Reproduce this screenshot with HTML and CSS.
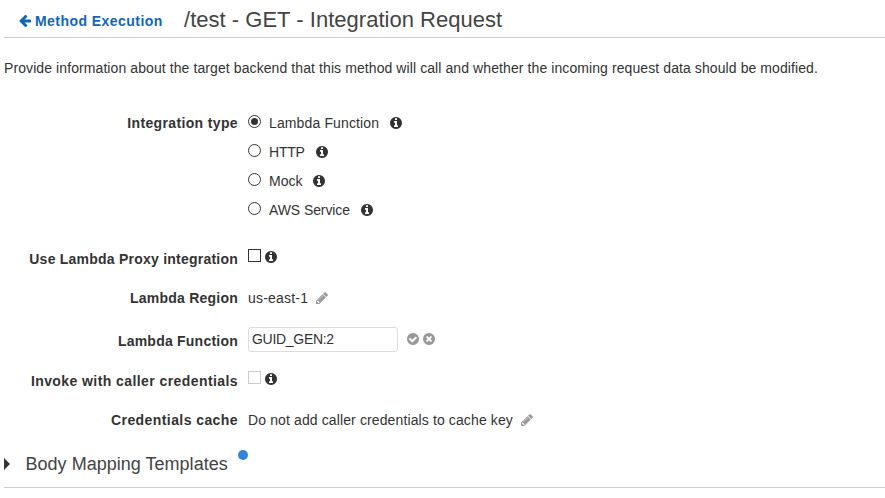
FILE: index.html
```html
<!DOCTYPE html>
<html lang="en">
<head>
<meta charset="utf-8">
<title>Integration Request</title>
<link rel="stylesheet" href="styles.css">
</head>
<body>
<svg class="sprite" aria-hidden="true">
  <defs>
    <symbol id="info" viewBox="0 128 1536 1536"><path d="M1024 1376v-160q0-14-9-23t-23-9h-96v-512q0-14-9-23t-23-9h-320q-14 0-23 9t-9 23v160q0 14 9 23t23 9h96v320h-96q-14 0-23 9t-9 23v160q0 14 9 23t23 9h448q14 0 23-9t9-23zm-128-896v-160q0-14-9-23t-23-9h-192q-14 0-23 9t-9 23v160q0 14 9 23t23 9h192q14 0 23-9t9-23zm640 416q0 209-103 385.5t-279.5 279.5-385.5 103-385.5-103-279.5-279.5-103-385.5 103-385.5 279.5-279.5 385.5-103 385.5 103 279.5 279.5 103 385.5z"/></symbol>
    <symbol id="check" viewBox="0 128 1536 1536"><path d="M1284 734q0-28-18-46l-91-90q-19-19-45-19t-45 19l-408 407-226-226q-19-19-45-19t-45 19l-91 90q-18 18-18 46 0 27 18 45l362 362q19 19 45 19 27 0 46-19l543-543q18-18 18-45zm252 162q0 209-103 385.5t-279.5 279.5-385.5 103-385.5-103-279.5-279.5-103-385.5 103-385.5 279.5-279.5 385.5-103 385.5 103 279.5 279.5 103 385.5z"/></symbol>
    <symbol id="times" viewBox="0 128 1536 1536"><path d="M1149 1122q0-26-19-45l-181-181 181-181q19-19 19-45 0-27-19-46l-90-90q-19-19-46-19-26 0-45 19l-181 181-181-181q-19-19-45-19-27 0-46 19l-90 90q-19 19-19 46 0 26 19 45l181 181-181 181q-19 19-19 45 0 27 19 46l90 90q19 19 46 19 26 0 45-19l181-181 181 181q19 19 45 19 27 0 46-19l90-90q19-19 19-46zm387-226q0 209-103 385.5t-279.5 279.5-385.5 103-385.5-103-279.5-279.5-103-385.5 103-385.5 279.5-279.5 385.5-103 385.5 103 279.5 279.5 103 385.5z"/></symbol>
    <symbol id="pencil" viewBox="0 128 1536 1536"><path d="M363 1536l91-91-235-235-91 91v107h128v128h107zm523-928q0-22-22-22-10 0-17 7l-542 542q-7 7-7 17 0 22 22 22 10 0 17-7l542-542q7-7 7-17zm-54-192l416 416-832 832h-416v-416zm683 96q0 53-37 90l-166 166-416-416 166-165q36-38 90-38 53 0 91 38l235 234q37 39 37 91z"/></symbol>
    <symbol id="arrow" viewBox="0 192 1536 1536"><path d="M1536 896v128q0 53-32.5 90.5t-84.5 37.5h-704l293 294q38 36 38 90t-38 90l-75 76q-37 37-90 37-52 0-91-37l-651-652q-37-37-37-90 0-52 37-91l651-650q38-38 91-38 52 0 90 38l75 74q38 38 38 91t-38 91l-293 293h704q52 0 84.5 37.5t32.5 90.5z"/></symbol>
  </defs>
</svg>
<main class="page">
  <header class="header">
    <a class="back"><svg class="icon"><use href="#arrow"/></svg><span class="back-text">Method Execution</span></a>
    <h1 class="title">/test - GET - Integration Request</h1>
  </header>
  <p class="intro">Provide information about the target backend that this method will call and whether the incoming request data should be modified.</p>
  <form class="form">
    <div class="row row-type">
      <span class="label">Integration type</span>
      <div class="options">
        <label class="option"><span class="radio checked"></span><span class="t-lambda">Lambda Function</span><svg class="icon"><use href="#info"/></svg></label>
        <label class="option"><span class="radio"></span><span class="t-http">HTTP</span><svg class="icon"><use href="#info"/></svg></label>
        <label class="option"><span class="radio"></span><span class="t-mock">Mock</span><svg class="icon"><use href="#info"/></svg></label>
        <label class="option"><span class="radio"></span><span class="t-aws">AWS Service</span><svg class="icon"><use href="#info"/></svg></label>
      </div>
    </div>
    <div class="row row-proxy">
      <span class="label">Use Lambda Proxy integration</span>
      <div class="value tight"><span class="checkbox"></span><svg class="icon"><use href="#info"/></svg></div>
    </div>
    <div class="row row-region">
      <span class="label">Lambda Region</span>
      <div class="value"><span class="t-region">us-east-1</span><svg class="icon muted"><use href="#pencil"/></svg></div>
    </div>
    <div class="row row-function">
      <span class="label">Lambda Function</span>
      <div class="value"><span class="input">GUID_GEN:2</span><span class="actions"><svg class="icon muted"><use href="#check"/></svg><svg class="icon muted"><use href="#times"/></svg></span></div>
    </div>
    <div class="row row-invoke">
      <span class="label">Invoke with caller credentials</span>
      <div class="value tight"><span class="checkbox disabled"></span><svg class="icon"><use href="#info"/></svg></div>
    </div>
    <div class="row row-cache">
      <span class="label">Credentials cache</span>
      <div class="value"><span class="t-cache">Do not add caller credentials to cache key</span><svg class="icon muted"><use href="#pencil"/></svg></div>
    </div>
  </form>
  <section class="mapping">
    <span class="caret"></span>
    <h2 class="mapping-title">Body Mapping Templates</h2>
    <span class="dot"></span>
  </section>
</main>
</body>
</html>
```
FILE: styles.css
```css
* { box-sizing: border-box; }
body {
  margin: 0;
  background: #fff;
  color: #333;
  font: 14px/20px "Liberation Sans", Arial, sans-serif;
}
.sprite { position: absolute; width: 0; height: 0; }
.page { height: 498px; padding-left: 4px; overflow: hidden; }
.icon { display: block; flex: none; width: 12px; height: 12px; fill: currentColor; }
.muted { color: #999; }
.header {
  display: flex;
  height: 38px;
  border-bottom: 1px solid #ccc;
}
.back {
  display: flex;
  align-items: center;
  gap: 4px;
  width: 180px;
  height: 20px;
  margin-top: 11px;
  padding-left: 15px;
  color: #1166bb;
  font-weight: bold;
}
.back-text { letter-spacing: 0.45px; }
.title {
  margin: 5px 0 0;
  color: #444;
  font-size: 22px;
  font-weight: normal;
  line-height: 30px;
  letter-spacing: 0.02px;
  white-space: nowrap;
}
.intro { margin: 20px 0 35px; letter-spacing: 0.09px; white-space: nowrap; }
.row { display: grid; grid-template-columns: 234px 1fr; column-gap: 10px; align-items: start; }
.label { font-weight: bold; text-align: right; white-space: nowrap; letter-spacing: 0.23px; }
.row-type .label { letter-spacing: 0.36px; }
.row-invoke .label, .row-cache .label { letter-spacing: 0.42px; }
.option { display: flex; align-items: center; height: 20px; margin-bottom: 9px; }
.option .icon { margin-left: 11px; }
.t-lambda { letter-spacing: 0.13px; }
.t-http { letter-spacing: -0.2px; }
.t-aws { letter-spacing: -0.09px; }
.t-region { letter-spacing: 0.2px; }
.t-cache { letter-spacing: 0.12px; }
.radio {
  display: grid;
  place-items: center;
  width: 13px;
  height: 13px;
  margin: 0 8px 3px 0;
  border: 1px solid #333;
  border-radius: 50%;
}
.checked::after { content: ""; width: 7px; height: 7px; border-radius: 50%; background: #333; }
.value { display: flex; align-items: center; height: 20px; }
.value > .icon { margin-left: 8px; }
.tight > .icon { margin-left: 4px; }
.checkbox { width: 13px; height: 13px; margin-bottom: 3px; border: 1px solid #333; }
.disabled { border-color: #ccc; }
.row-type { height: 136px; }
.row-proxy { height: 39px; }
.row-proxy .value, .row-invoke .value { margin-top: -2px; }
.row-region { height: 39px; }
.row-function { height: 44px; padding-top: 4px; }
.row-function .value { height: 25px; margin-top: -4px; }
.row-invoke { height: 39px; }
.row-cache { height: 44px; }
.input {
  width: 150px;
  height: 25px;
  padding: 1px 3px;
  border: 1px solid #ddd;
  border-radius: 3px;
  letter-spacing: -0.3px;
}
.actions { display: flex; gap: 4px; margin: 0 0 1px 9px; }
.mapping {
  display: flex;
  align-items: center;
  height: 34px;
  border-bottom: 1px solid #ccc;
}
.caret { margin-bottom: 14px; border: solid transparent; border-width: 6px 0 6px 6px; border-left-color: #333; }
.mapping-title { margin: 0 0 14px 15.5px; color: #444; font-size: 18px; font-weight: normal; letter-spacing: 0.02px; }
.dot { width: 10px; height: 10px; margin: 0 0 31px 10px; border-radius: 50%; background: #3184dd; }
```
